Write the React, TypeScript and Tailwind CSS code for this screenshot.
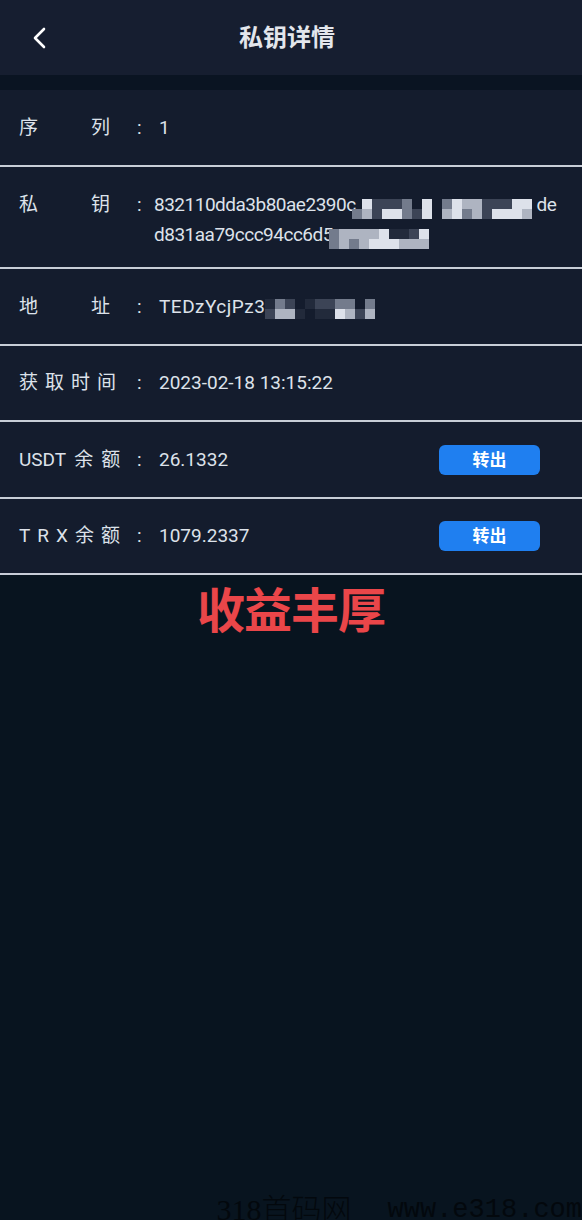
import React from 'react';

// mosaic cell codes -> colour classes
const cellClass: Record<string, string> = {
  W: 'bg-[#dde1ea]',
  L: 'bg-[#aeb4c1]',
  M: 'bg-[#737b8c]',
  D: 'bg-[#3c4456]',
  B: 'bg-[#222a3b]',
  '.': 'bg-transparent',
};

const Mosaic: React.FC<{ rows: string[]; className?: string }> = ({ rows, className }) => (
  <span className={`inline-flex flex-col align-middle ${className ?? ''}`}>
    {rows.map((r, i) => (
      <span key={i} className="flex">
        {r.split('').map((c, j) => (
          <span key={j} className={`block w-[10px] h-[10px] ${cellClass[c]}`} />
        ))}
      </span>
    ))}
  </span>
);

const Spread: React.FC<{ chars: string }> = ({ chars }) => (
  <span className="w-[91px] flex justify-between">
    {chars.split('').map((c, j) => (
      <span key={j}>{c}</span>
    ))}
  </span>
);

type Row = {
  label: React.ReactNode;
  value: React.ReactNode;
  height: string;
  multi?: boolean;
  action?: boolean;
};

const rows: Row[] = [
  { label: <Spread chars="序列" />, value: <span>1</span>, height: 'h-[77px]' },
  {
    label: <Spread chars="私钥" />,
    height: 'h-[102px]',
    multi: true,
    value: (
      <div className="-ml-[5px] leading-[30px] tracking-[-0.5px]">
        <div className="whitespace-nowrap">
          832110dda3b80ae2390c
          <Mosaic
            className="-ml-[4px] translate-y-[3px]"
            rows={['.WDDDM.W.MWLLDDDWW', 'MLDWWMDW.LWMLDWWWL']}
          />
          <span className="ml-[5px]">de</span>
        </div>
        <div className="whitespace-nowrap">
          d831aa79ccc94cc6d5
          <Mosaic className="-ml-[4px] translate-y-[3px]" rows={['MLLLLWBBDW', 'MLMLWWWLLL']} />
        </div>
      </div>
    ),
  },
  {
    label: <Spread chars="地址" />,
    height: 'h-[77px]',
    value: (
      <span className="whitespace-nowrap tracking-[0.5px]">
        TEDzYcjPz3
        <Mosaic className="translate-y-[2px]" rows={['BMD.BDDMM.M.', 'DLLB.BBWLDL.']} />
      </span>
    ),
  },
  {
    label: (
      <span className="flex gap-[7px]">
        <span>获</span>
        <span>取</span>
        <span>时</span>
        <span>间</span>
      </span>
    ),
    value: <span>2023-02-18 13:15:22</span>,
    height: 'h-[76px]',
  },
  {
    label: (
      <span className="flex gap-[8px]">
        <span>USDT</span>
        <span>余</span>
        <span>额</span>
      </span>
    ),
    value: <span>26.1332</span>,
    height: 'h-[77px]',
    action: true,
  },
  {
    label: (
      <span className="flex gap-[7px]">
        <span>T</span>
        <span>R</span>
        <span>X</span>
        <span>余</span>
        <span>额</span>
      </span>
    ),
    value: <span>1079.2337</span>,
    height: 'h-[76px]',
    action: true,
  },
];

export default function App() {
  return (
    <div className="h-[1220px] overflow-hidden flex flex-col bg-[#08141f] font-['Roboto','Noto_Sans_CJK_SC',sans-serif] text-[#dde2ea]">
      {/* Header */}
      <div className="h-[75px] shrink-0 bg-[#161e30] grid grid-cols-[80px_1fr_80px] items-center">
        <div className="pl-[32px]">
          <svg width="16" height="22" viewBox="0 0 16 22" fill="none">
            <path d="M12 2 L3 11 L12 20" stroke="#ffffff" strokeWidth="2.6" strokeLinecap="round" strokeLinejoin="round" />
          </svg>
        </div>
        <h1 className="text-center text-[24px] font-bold text-[#e3e6ec] -translate-x-[4px]">私钥详情</h1>
        <div />
      </div>
      <div className="h-[15px] shrink-0 bg-[#0a1422]" />

      {/* Detail list */}
      <div className="bg-[#141c2d] shrink-0">
        {rows.map((row, i) => (
          <div
            key={i}
            className={`${row.height} flex ${row.multi ? 'items-start pt-[23px]' : 'items-center'} pl-[19px] pr-[42px] border-b-2 border-[#c8cdd7] text-[19px] leading-[30px]`}
          >
            <span className="w-[118px] shrink-0">{row.label}</span>
            <span className="w-[5px] shrink-0">:</span>
            <div className="ml-[17px] flex-1">{row.value}</div>
            {row.action && (
              <button className="w-[101px] h-[30px] rounded-[6px] bg-[#1f7ff0] text-white text-[17px] font-bold">
                转出
              </button>
            )}
          </div>
        ))}
      </div>

      <div className="pt-[9px] text-center text-[48px] leading-[56px] font-bold text-[#ea4649] tracking-[-1px]">
        收益丰厚
      </div>

      {/* Watermark */}
      <div className="mt-auto h-[30px] overflow-hidden flex justify-end items-start text-[#03080d]">
        <span className="whitespace-pre font-['Liberation_Serif','Noto_Sans_CJK_SC',serif] font-light text-[30px] leading-[40px]">
          318首码网
        </span>
        <span className="ml-[36px] whitespace-pre font-['Liberation_Mono',monospace] text-[27px] leading-[40px]">
          www.e318.com
        </span>
      </div>
    </div>
  );
}
